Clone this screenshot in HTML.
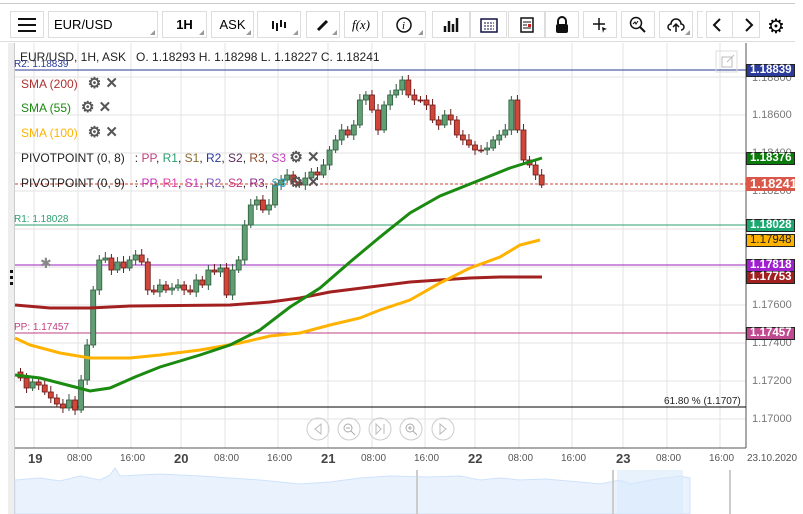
<!DOCTYPE html>
<html><head><meta charset="utf-8"><style>
body{margin:0;width:803px;height:514px;overflow:hidden;background:#fff;font-family:"Liberation Sans",sans-serif;position:relative}
.b{position:absolute;top:11px;height:27px;border:1px solid #ddd;box-sizing:border-box;background:#fff;font-size:13px;display:flex;align-items:center;justify-content:center}
.b.t:after{content:"";position:absolute;right:2px;bottom:2px;border-left:5px solid transparent;border-bottom:5px solid #999}
.lg{position:absolute;font-size:12px;white-space:nowrap}
.lab{position:absolute;left:746px;width:49px;height:13px;font-size:11.5px;font-weight:bold;color:#fff;box-sizing:border-box;border:1px solid #222;padding-left:3px;line-height:11px}
.px{position:absolute;left:752px;font-size:11px;color:#777}
.tx{position:absolute;top:453px;font-size:10px;color:#555}
.dy{position:absolute;top:451px;font-size:13px;font-weight:bold;color:#444}
</style></head><body>
<div style="position:absolute;left:0;top:3px;width:795px;height:1px;background:#ccc"></div>
<div class="b" style="left:10px;width:34px"><svg width="18" height="14"><path d="M0 1h18M0 7h18M0 13h18" stroke="#111" stroke-width="2"/></svg></div>
<div class="b t" style="left:48px;width:110px;justify-content:flex-start;padding-left:5px">EUR/USD</div>
<div class="b t" style="left:162px;width:45px;font-weight:bold">1H</div>
<div class="b t" style="left:211px;width:43px">ASK</div>
<div class="b t" style="left:257px;width:44px"><svg width="16" height="12"><path d="M2 2v8M6 4v8M10 1v7M14 3v6" stroke="#111" stroke-width="2"/></svg></div>
<div class="b t" style="left:306px;width:34px"><svg width="14" height="14"><path d="M2 12L11 3" stroke="#111" stroke-width="3"/></svg></div>
<div class="b" style="left:344px;width:34px;font-style:italic;font-family:'Liberation Serif',serif">f(x)</div>
<div class="b t" style="left:382px;width:44px"><svg width="16" height="16"><circle cx="8" cy="8" r="7" fill="none" stroke="#111" stroke-width="1.5"/><text x="6" y="12" font-size="11" font-style="italic" font-family="Liberation Serif">i</text></svg></div>
<div class="b" style="left:432px;width:38px"><svg width="16" height="14"><path d="M2 14V8M6 14V3M10 14V6M14 14V0" stroke="#111" stroke-width="2.5"/></svg></div>
<div class="b" style="left:470px;width:37px"><svg width="18" height="16"><rect x="1" y="2" width="16" height="13" fill="none" stroke="#114" stroke-width="1.5"/><path d="M4 6h10M4 9h10M4 12h10" stroke="#114" stroke-dasharray="2 1"/></svg></div>
<div class="b" style="left:508px;width:37px"><svg width="14" height="16"><rect x="1" y="1" width="12" height="14" fill="none" stroke="#111" stroke-width="1.5"/><path d="M3 5h8M3 8h4M3 11h8" stroke="#111"/><rect x="8" y="7" width="3" height="3" fill="#c22"/></svg></div>
<div class="b" style="left:545px;width:34px"><svg width="14" height="18"><path d="M3 8V5a4 4 0 0 1 8 0v3" fill="none" stroke="#111" stroke-width="2"/><rect x="1" y="8" width="12" height="9" rx="2" fill="#111"/></svg></div>
<div class="b" style="left:583px;width:34px"><svg width="16" height="16"><path d="M7 1v12M1 7h12" stroke="#111" stroke-width="1.5"/><path d="M10 10l5 2-3 1-1 3z" fill="#111"/></svg></div>
<div class="b" style="left:621px;width:34px"><svg width="18" height="18"><circle cx="7" cy="7" r="5.5" fill="none" stroke="#111" stroke-width="1.5"/><path d="M11 11l5 5" stroke="#111" stroke-width="2"/><path d="M4 8l2-2 1 2 2-3" fill="none" stroke="#111"/></svg></div>
<div class="b t" style="left:659px;width:34px"><svg width="18" height="16"><path d="M4 13a3 3 0 0 1 0-6a5 5 0 0 1 10 0a3 3 0 0 1 0 6" fill="none" stroke="#111" stroke-width="1.5"/><path d="M9 15V8M6 10l3-3 3 3" fill="none" stroke="#111" stroke-width="1.5"/></svg></div>
<div class="b" style="left:697px;width:6px;border-right:none"></div>
<div class="b" style="left:706px;width:54px;font-size:20px;justify-content:space-around"><svg width="10" height="14"><path d="M8 1L2 7l6 6" fill="none" stroke="#111" stroke-width="2"/></svg><span style="width:1px;height:25px;background:#ddd"></span><svg width="10" height="14"><path d="M2 1l6 6-6 6" fill="none" stroke="#111" stroke-width="2"/></svg></div>
<div style="position:absolute;left:767px;top:14px;font-size:20px">⚙</div>
<div style="position:absolute;left:0;top:41px;width:795px;height:1px;background:#ddd"></div>
<div style="position:absolute;left:8px;top:43px;width:6px;height:471px;background:#eee;border-right:1px solid #ccc"></div>
<div style="position:absolute;left:10px;top:270px;width:3px;height:3px;background:#111;box-shadow:0 6px #111,0 12px #111"></div>

<svg style="position:absolute;left:0;top:0" width="803" height="514">
<g stroke="#e3e3e3" stroke-width="1">
<path d="M15 77H746M15 115H746M15 153H746M15 191H746M15 229H746M15 267H746M15 305H746M15 343H746M15 381H746M15 419H746"/>
<path d="M34 43V448M78 43V448M131 43V448M181 43V448M225 43V448M278 43V448M328 43V448M372 43V448M425 43V448M475 43V448M519 43V448M572 43V448M623 43V448M667 43V448M720 43V448"/>
</g>
<path d="M746 43V448M15 448H746" stroke="#555"/>
<path d="M15 70H795" stroke="#2a3a9a"/>
<path d="M15 225H795" stroke="#2aa070"/>
<path d="M15 265H795" stroke="#a020c0"/>
<path d="M15 333H795" stroke="#c04080"/>
<path d="M15 407H746" stroke="#000"/>
<path d="M15 184H795" stroke="#d04030" stroke-dasharray="3 2"/>
<g id="c"></g>
<polyline fill="none" stroke="#a32020" stroke-width="3" points="15,305 50,308 90,308 130,306 230,305 270,302 300,298 330,292 370,287 410,282 440,280 470,278 500,277 542,277"/>
<polyline fill="none" stroke="#ffb300" stroke-width="3" points="15,338 30,345 60,353 90,358 130,358 160,355 200,350 240,343 270,336 300,333 330,325 360,318 380,310 410,300 440,283 470,268 500,257 520,245 540,240"/>
<polyline fill="none" stroke="#1a8a10" stroke-width="3" points="15,375 40,378 75,387 90,391 110,388 135,377 160,367 200,355 230,345 260,330 290,307 320,288 350,262 380,237 410,213 440,196 480,180 510,168 542,158"/>
<rect x="716" y="51" width="21" height="21" fill="none" stroke="#ddd"/>
<path d="M722 57h10v10h-10z M727 62l7-7" fill="none" stroke="#bbb"/>
<g fill="none" stroke="#ccc"><circle cx="318" cy="429" r="11"/><circle cx="349" cy="429" r="11"/><circle cx="380" cy="429" r="11"/><circle cx="411" cy="429" r="11"/><circle cx="443" cy="429" r="11"/>
<path d="M321 424l-6 5 6 5z M440 424l6 5-6 5z M376 424v10l5-5z M384 424v10" stroke="#bbb"/>
<circle cx="348" cy="428" r="4" stroke="#aaa"/><circle cx="410" cy="428" r="4" stroke="#aaa"/><path d="M351 431l4 4M413 431l4 4M346 428h4M408 428h4M410 426v4" stroke="#aaa"/></g>
<rect x="15" y="470" width="780" height="44" fill="#fff"/>
<path d="M15 480L40 478 60 481 80 476 100 480 110 475 115 468 120 476 160 474 200 476 230 478 260 480 300 484 330 482 360 478 390 476 430 477 460 476 480 480 500 478 520 480 545 479 580 482 600 484 620 480 630 484 650 480 665 478 680 476 690 478 690 514 15 514Z" fill="#eaf3fd" stroke="#cfe2fb"/>
<path d="M417 470V514M613 470V514M730 470V514" stroke="#ccc" stroke-width="2"/>
<rect x="617" y="470" width="66" height="44" fill="#d7e9fc" opacity=".6"/>
</svg>

<div class="lg" style="left:20px;top:50px;color:#222">EUR/USD, 1H, ASK &nbsp; O. 1.18293 H. 1.18298 L. 1.18227 C. 1.18241</div>
<div class="lg" style="left:14px;top:59px;font-size:10px;color:#2a3a9a">R2: 1.18839</div>
<div class="lg" style="left:21px;top:74px;color:#b03030">SMA (200) &nbsp; <b style="color:#555;font-size:15px">⚙ ✕</b></div>
<div class="lg" style="left:21px;top:98px;color:#1a8a10">SMA (55) &nbsp; <b style="color:#555;font-size:15px">⚙ ✕</b></div>
<div class="lg" style="left:21px;top:123px;color:#ffb300">SMA (100) &nbsp; <b style="color:#555;font-size:15px">⚙ ✕</b></div>
<div class="lg" style="left:21px;top:148px;color:#222">PIVOTPOINT (0, 8) &nbsp; : <span style="color:#c04080">PP</span>, <span style="color:#2aa070">R1</span>, <span style="color:#8a6a30">S1</span>, <span style="color:#2a3a9a">R2</span>, <span style="color:#5a2a5a">S2</span>, <span style="color:#8a4a2a">R3</span>, <span style="color:#c040c0">S3</span> <b style="color:#555;font-size:15px">⚙ ✕</b></div>
<div class="lg" style="left:21px;top:173px;color:#222">PIVOTPOINT (0, 9) &nbsp; : <span style="color:#c030c0">PP</span>, <span style="color:#e040a0">R1</span>, <span style="color:#c040c0">S1</span>, <span style="color:#7a5ac0">R2</span>, <span style="color:#c03080">S2</span>, <span style="color:#8a2a8a">R3</span>, <span style="color:#30a0c0">S3</span> <b style="color:#555;font-size:15px">⚙ ✕</b></div>
<div class="lg" style="left:14px;top:214px;font-size:10px;color:#2aa070">R1: 1.18028</div>
<div class="lg" style="left:14px;top:322px;font-size:10px;color:#c04080">PP: 1.17457</div>
<div class="lg" style="left:40px;top:255px;font-size:14px;color:#888">✱</div>
<div class="lg" style="left:664px;top:396px;font-size:10px;color:#222">61.80 % (1.1707)</div>

<div class="px" style="top:72px">1.18800</div><div class="px" style="top:109px">1.18600</div><div class="px" style="top:147px">1.18400</div><div class="px" style="top:185px">1.18200</div><div class="px" style="top:223px">1.18000</div><div class="px" style="top:299px">1.17600</div><div class="px" style="top:337px">1.17400</div><div class="px" style="top:375px">1.17200</div><div class="px" style="top:413px">1.17000</div>
<div class="lab" style="top:64px;background:#2b3b9c">1.18839</div>
<div class="lab" style="top:152px;background:#0a7a0a">1.18376</div>
<div class="lab" style="top:177px;background:#d9584a;border-color:#d9584a;font-size:13px;height:14px">1.18241</div>
<div class="lab" style="top:219px;background:#1aa870">1.18028</div>
<div class="lab" style="top:234px;background:#ffb300;color:#222;font-weight:normal">1.17948</div>
<div class="lab" style="top:259px;background:#a020d0">1.17818</div>
<div class="lab" style="top:271px;background:#a02020">1.17753</div>
<div class="lab" style="top:327px;background:#c04a90">1.17457</div>

<div class="dy" style="left:28px">19</div><div class="tx" style="left:67px">08:00</div><div class="tx" style="left:120px">16:00</div>
<div class="dy" style="left:174px">20</div><div class="tx" style="left:214px">08:00</div><div class="tx" style="left:267px">16:00</div>
<div class="dy" style="left:321px">21</div><div class="tx" style="left:361px">08:00</div><div class="tx" style="left:414px">16:00</div>
<div class="dy" style="left:468px">22</div><div class="tx" style="left:508px">08:00</div><div class="tx" style="left:561px">16:00</div>
<div class="dy" style="left:616px">23</div><div class="tx" style="left:656px">08:00</div><div class="tx" style="left:709px">16:00</div><div class="tx" style="left:747px">23.10.2020</div>
<script>
var c=[378,388,382,385,392,398,404,408,400,410,380,345,290,260,258,270,262,268,260,255,262,290,292,285,290,288,285,290,292,280,285,270,272,268,295,270,260,225,205,200,210,205,185,180,175,182,185,178,172,175,165,150,140,130,135,125,100,95,110,130,105,95,90,80,95,100,100,105,120,125,115,120,135,140,145,150,150,148,140,135,130,100,130,160,165,175,185];
var s='',o=372;
for(var i=0;i<c.length;i++){var x=18+i*6.06,cl=c[i],t=Math.min(o,cl),b=Math.max(o,cl),up=cl<o;
var h=Math.max(b-t,1);
s+='<line x1="'+(x+2.5)+'" x2="'+(x+2.5)+'" y1="'+(t-4-(i%3))+'" y2="'+(b+3+(i%2)*2)+'" stroke="'+(up?'#2e5a3c':'#6a1a1a')+'"/>';
s+='<rect x="'+x+'" y="'+t+'" width="5" height="'+h+'" fill="'+(up?'#5f9f73':'#d0473a')+'" stroke="'+(up?'#2e5a3c':'#6a1a1a')+'" stroke-width=".8"/>';o=cl;}
document.getElementById('c').innerHTML=s;
</script>
</body></html>
